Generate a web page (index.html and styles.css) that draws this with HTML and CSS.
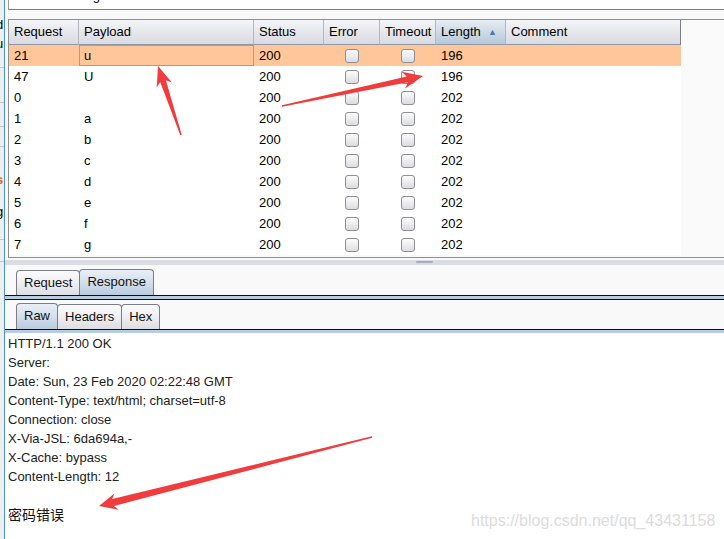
FILE: index.html
```html
<!doctype html>
<html lang="en">
<head>
    <meta charset="utf-8">
    <title>Intruder attack - results</title>
    <link rel="stylesheet" href="styles.css">
</head>
<body>
<div class="window">

  <!-- clipped neighbour panel on the left -->
  <div class="side">
    <div class="sd-top"></div>
    <div class="sd-txt">d</div>
    <div class="sd-txt">u</div>
    <div class="sd-box h15"></div>
    <div class="sd-box h34"></div>
    <div class="sd-box h23"></div>
    <div class="sd-box h19"></div>
    <div class="sd-gap h23"></div>
    <div class="sd-txt hot">s</div>
    <div class="sd-gap h13"></div>
    <div class="sd-txt">g</div>
    <div class="sd-box h18"></div>
    <div class="sd-box h21"></div>
  </div>

  <div class="main">
    <div class="filter"><span>Filter: Showing all items</span></div>

    <div class="results">
      <table class="grid">
        <colgroup>
          <col class="w70"><col class="w175"><col class="w70"><col class="w56"><col class="w56"><col class="w70"><col class="w175">
        </colgroup>
        <thead>
          <tr>
            <th>Request</th><th>Payload</th><th>Status</th><th>Error</th><th>Timeout</th>
            <th class="sorted">Length<span class="sort">&#9650;</span></th><th>Comment</th>
          </tr>
        </thead>
        <tbody>
          <tr class="hit"><td>21</td><td class="focus">u</td><td>200</td><td class="c"><span class="cb"></span></td><td class="c"><span class="cb"></span></td><td>196</td><td></td></tr>
          <tr><td>47</td><td>U</td><td>200</td><td class="c"><span class="cb"></span></td><td class="c"><span class="cb"></span></td><td>196</td><td></td></tr>
          <tr><td>0</td><td></td><td>200</td><td class="c"><span class="cb"></span></td><td class="c"><span class="cb"></span></td><td>202</td><td></td></tr>
          <tr><td>1</td><td>a</td><td>200</td><td class="c"><span class="cb"></span></td><td class="c"><span class="cb"></span></td><td>202</td><td></td></tr>
          <tr><td>2</td><td>b</td><td>200</td><td class="c"><span class="cb"></span></td><td class="c"><span class="cb"></span></td><td>202</td><td></td></tr>
          <tr><td>3</td><td>c</td><td>200</td><td class="c"><span class="cb"></span></td><td class="c"><span class="cb"></span></td><td>202</td><td></td></tr>
          <tr><td>4</td><td>d</td><td>200</td><td class="c"><span class="cb"></span></td><td class="c"><span class="cb"></span></td><td>202</td><td></td></tr>
          <tr><td>5</td><td>e</td><td>200</td><td class="c"><span class="cb"></span></td><td class="c"><span class="cb"></span></td><td>202</td><td></td></tr>
          <tr><td>6</td><td>f</td><td>200</td><td class="c"><span class="cb"></span></td><td class="c"><span class="cb"></span></td><td>202</td><td></td></tr>
          <tr><td>7</td><td>g</td><td>200</td><td class="c"><span class="cb"></span></td><td class="c"><span class="cb"></span></td><td>202</td><td></td></tr>
        </tbody>
      </table>
    </div>

    <div class="splitter"><span class="grip"></span></div>

    <div class="tabrow top">
      <span class="tab">Request</span><span class="tab active">Response</span>
    </div>
    <div class="tabline"></div>

    <div class="tabrow sub">
      <span class="tab active">Raw</span><span class="tab">Headers</span><span class="tab">Hex</span>
    </div>
    <div class="tabline last"></div>

<pre class="raw">HTTP/1.1 200 OK
Server: 
Date: Sun, 23 Feb 2020 02:22:48 GMT
Content-Type: text/html; charset=utf-8
Connection: close
X-Via-JSL: 6da694a,-
X-Cache: bypass
Content-Length: 12

<span class="body-text">密码错误</span></pre>
  </div>
</div>

<!-- red annotation arrows drawn over the screenshot -->
<svg class="marks" width="724" height="539" viewBox="0 0 724 539">
  <polygon points="180.3,135.2 160.2,82.1 156.7,87.5 158,66 171.9,82.5 165.9,80.2 181.7,134.8"/>
  <polygon points="281.9,105.3 406.8,76.4 401.6,71.8 423,76 405.2,88.6 408,82.2 282.1,106.7"/>
  <polygon points="371.8,436.3 112.2,499.1 114.4,493.4 99,506 118.6,509.8 113.9,505.9 372.2,437.7"/>
</svg>

<div class="watermark">https://blog.csdn.net/qq_43431158</div>
</body>
</html>
```

FILE: styles.css
```css
body {
  margin: 0;
  width: 724px;
  height: 539px;
  overflow: hidden;
  position: relative;
  font-family: "Liberation Sans", Arial, sans-serif;
  font-size: 13px;
  color: #000;
  background: #f9f9f9;
}

.window {
  display: flex;
  height: 539px;
}

/* left strip */
.side {
  width: 4px;
  flex: none;
  overflow: hidden;
  background: #eeeeee;
  border-right: 1px solid #4a92dc;
}
.sd-top { height: 15px; }
.sd-txt {
  height: 19px;
  line-height: 19px;
  text-indent: -4px;
  white-space: nowrap;
}
.sd-txt.hot { color: #e8622c; font-weight: bold; }
.sd-box { border-bottom: 1px solid #c4c4c4; }
.h13 { height: 13px; }
.h15 { height: 14px; }
.h18 { height: 18px; }
.h19 { height: 19px; }
.h21 { height: 21px; }
.h23 { height: 23px; }
.h34 { height: 34px; }

.main {
  flex: 1;
  display: flex;
  flex-direction: column;
  min-width: 0;
}

/* filter bar, mostly scrolled off */
.filter {
  height: 9px;
  margin-left: 3px;
  overflow: hidden;
  background: #fff;
  border-left: 1px solid #9a9a9a;
  border-bottom: 1px solid #7c7c7c;
}
.filter span {
  display: block;
  margin-top: -12px;
  padding-left: 5px;
  line-height: 15px;
  white-space: nowrap;
}

/* results table */
.results {
  margin-top: 9px;
  margin-left: 3px;
  height: 237px;
  overflow: hidden;
  background: #fafafa;
  border-top: 1px solid #8e8e8e;
  border-left: 1px solid #8e8e8e;
  border-bottom: 1px solid #8e8e8e;
}

.grid {
  table-layout: fixed;
  width: 672px;
  border-collapse: separate;
  border-spacing: 0;
  background: #fff;
}
.w70 { width: 70px; }
.w175 { width: 175px; }
.w56 { width: 56px; }

.grid th {
  height: 24px;
  padding: 0 5px;
  line-height: 22px;
  text-align: left;
  font-weight: normal;
  white-space: nowrap;
  overflow: hidden;
  background: linear-gradient(#f4f5f8, #e4e6eb 55%, #d8dbe2);
  border-right: 1px solid #b3b7c0;
  border-bottom: 1px solid #8d97a6;
}
.grid th:last-child { border-right-color: #7d7f86; }
.grid th.sorted {
  background: linear-gradient(#e7edf4, #cbd8e5 55%, #b7c8da);
}
.sort {
  float: right;
  margin-right: 3px;
  font-size: 9px;
  color: #4b78a8;
}

.grid td {
  height: 21px;
  padding: 0 5px;
  white-space: nowrap;
  overflow: hidden;
}
.grid tr.hit td { background: #ffc699; }
.grid td.focus {
  outline: 1px solid #8aa4c2;
  outline-offset: -1px;
}
.grid td.c { text-align: center; }

.cb {
  display: inline-block;
  width: 12px;
  height: 12px;
  vertical-align: middle;
  border: 1px solid #8c8e92;
  border-radius: 3px;
  background: linear-gradient(#fdfdfd, #e9e9ec 60%, #dcdde1);
}

/* divider between the panes */
.splitter {
  margin-top: 2px;
  height: 5px;
  padding-left: 411px;
  background: #dadce2;
}
.grip {
  display: block;
  width: 17px;
  height: 2px;
  margin-top: 1px;
  border-radius: 1px;
  background: #a7afbc;
}

/* tab strips */
.tabrow {
  display: flex;
  align-items: flex-end;
  padding-left: 11px;
}
.tabrow.top { height: 30px; }
.tabrow.sub { height: 29px; }

.tab {
  height: 24px;
  line-height: 24px;
  padding: 0 7px;
  border: 1px solid #7b7e84;
  border-bottom: none;
  border-radius: 4px 4px 0 0;
  background: linear-gradient(#fbfbfc, #eeeff2 50%, #dcdee3);
  margin-right: -1px;
  color: #111;
}
.tab.active {
  height: 25px;
  background: linear-gradient(#e9eff6, #d3dfeb 50%, #b9cce0);
  position: relative;
}

.tabline {
  height: 3px;
  background: #b9cde2;
  border-top: 1px solid #0c0c1c;
  border-bottom: 1px solid #0c0c1c;
}
.tabline.last { border-bottom: none; }

/* raw response */
.raw {
  flex: 1;
  margin: 0;
  padding: 1px 3px;
  background: #fff;
  font-family: "Liberation Sans", Arial, sans-serif;
  font-size: 13px;
  line-height: 19px;
  color: #222;
  white-space: pre;
}
.body-text {
  font-family: "Noto Sans CJK SC", "Liberation Sans", sans-serif;
  font-size: 14px;
  color: #111;
}

/* overlays */
.marks {
  position: absolute;
  left: 0;
  top: 0;
  pointer-events: none;
}
.marks polygon { fill: #f03c3c; }

.watermark {
  position: absolute;
  left: 471px;
  top: 512px;
  font-size: 16px;
  color: #dcdcdc;
  white-space: nowrap;
}
```
